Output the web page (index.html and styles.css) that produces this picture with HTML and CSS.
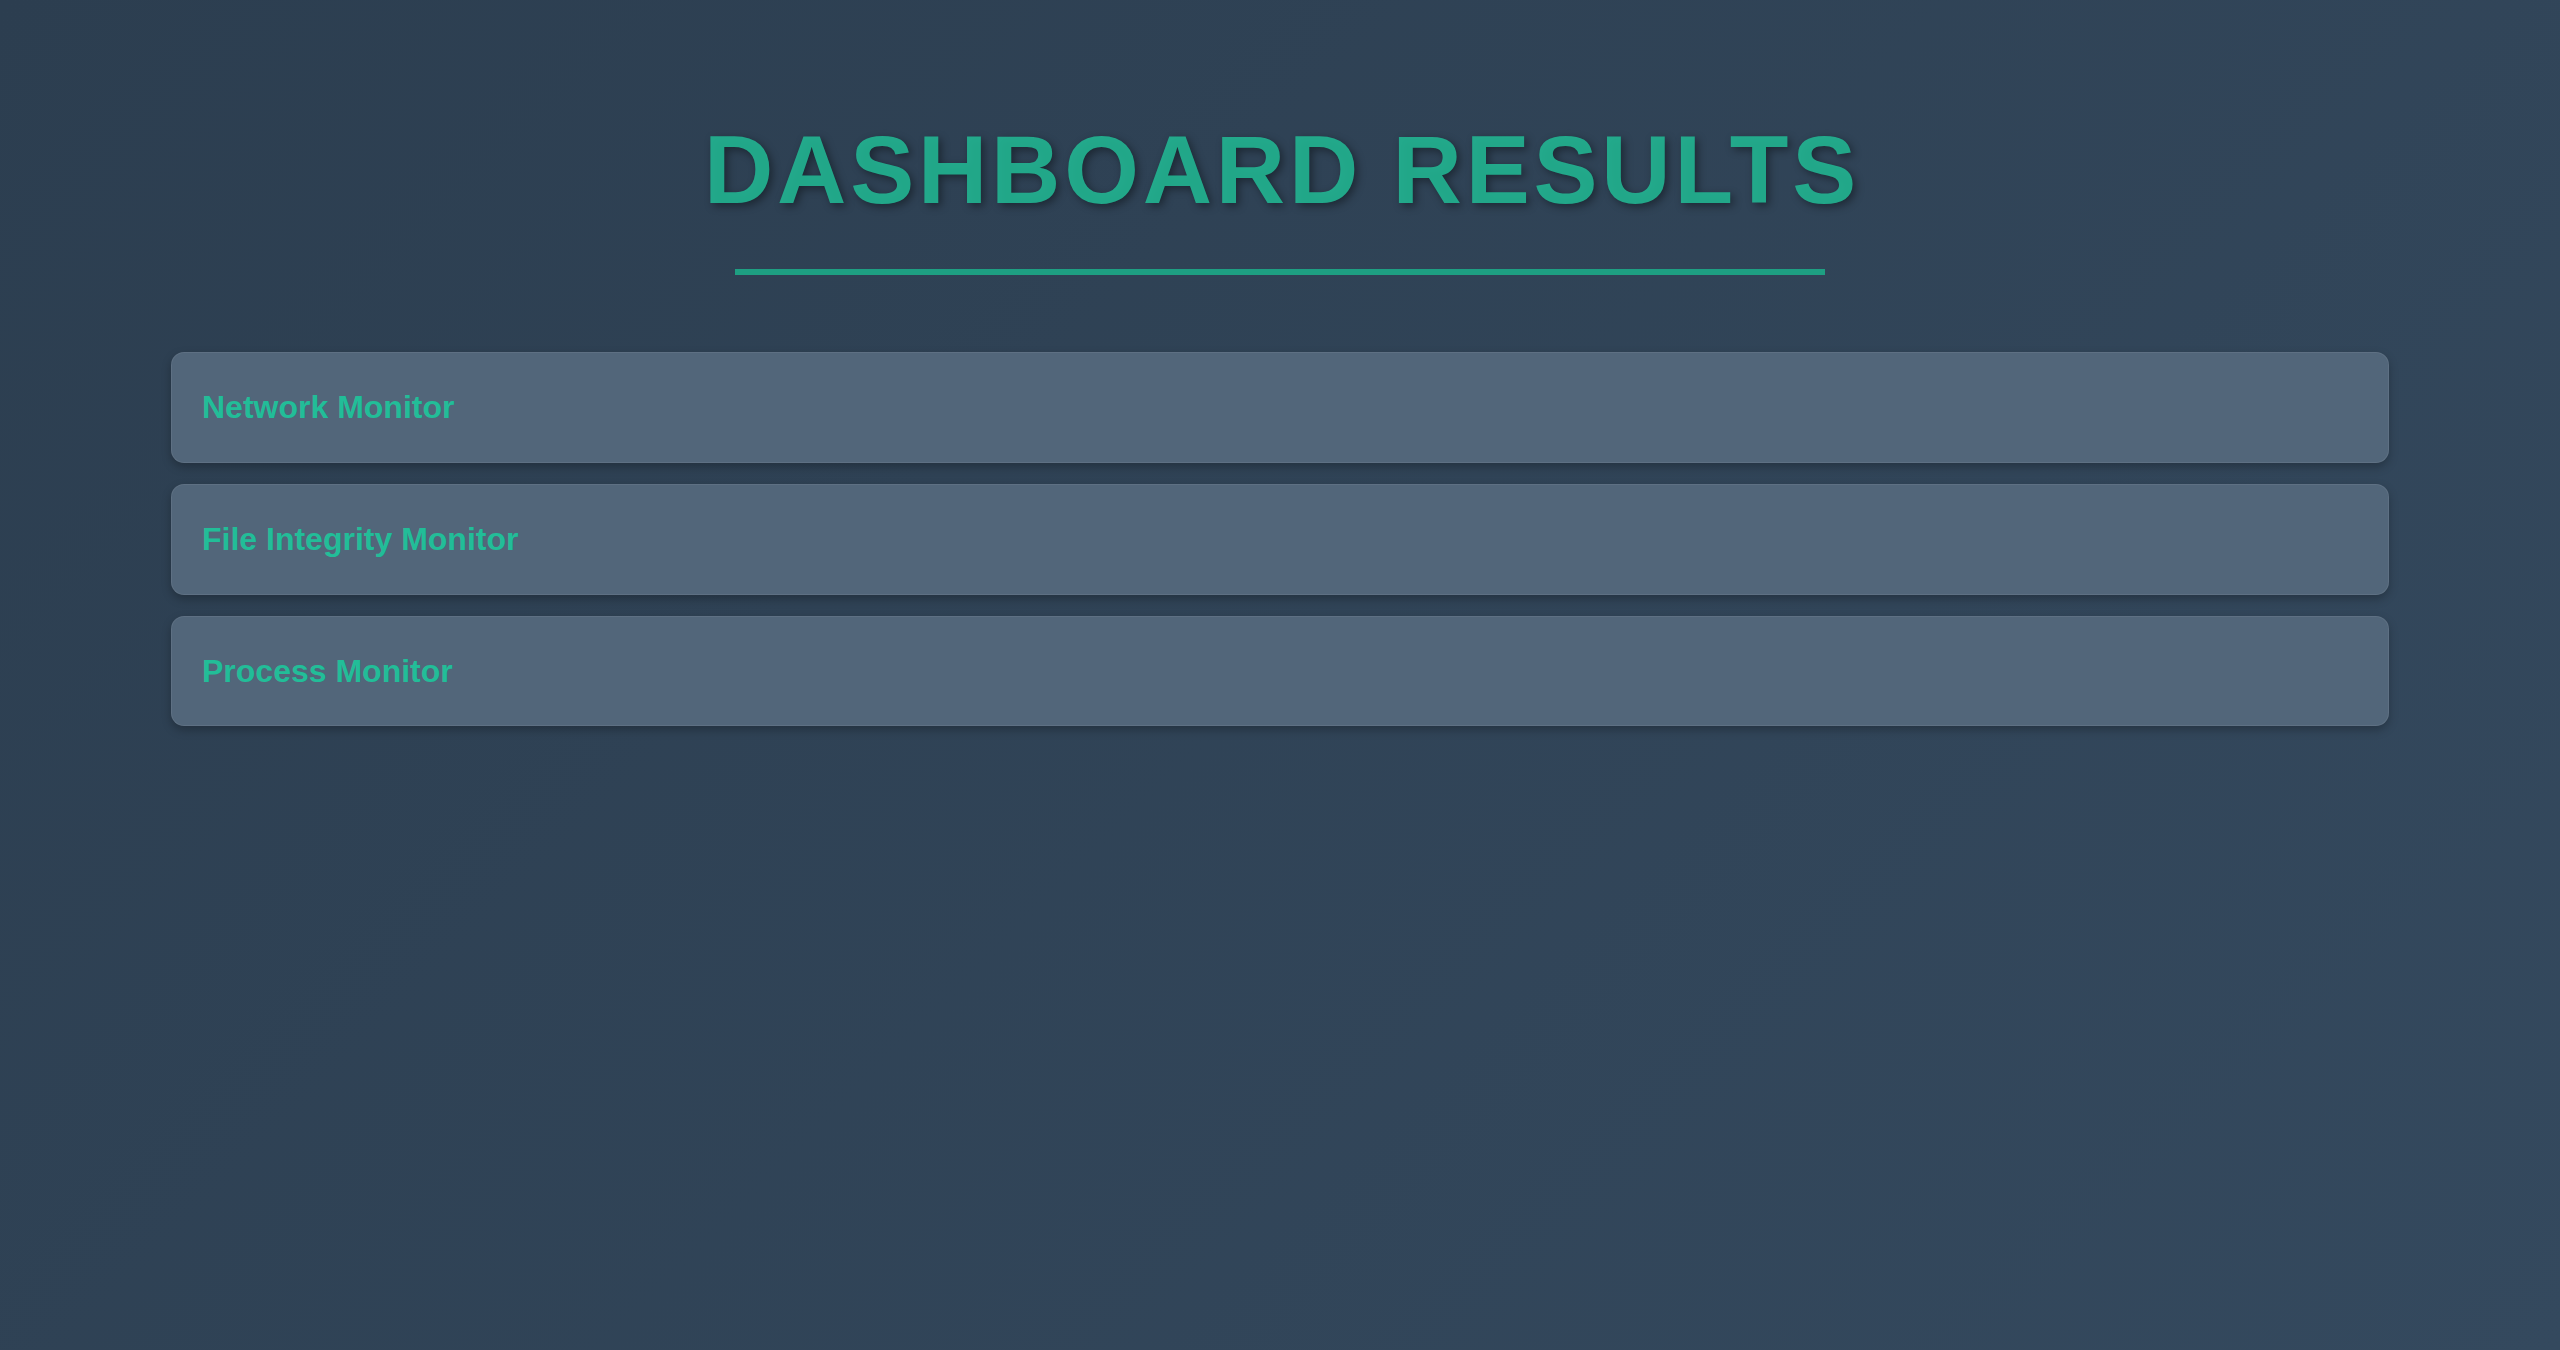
FILE: index.html
```html
<!DOCTYPE html>
<html lang="en">
<head>
<meta charset="utf-8">
<title>Dashboard Results</title>
<link rel="stylesheet" href="styles.css">
</head>
<body>
<div class="page">
  <header class="header">
    <h1 class="title">DASHBOARD RESULTS</h1>
    <div class="divider"></div>
  </header>
  <main class="cards">
    <section class="card"><h2 class="card-title">Network Monitor</h2></section>
    <section class="card"><h2 class="card-title">File Integrity Monitor</h2></section>
    <section class="card"><h2 class="card-title">Process Monitor</h2></section>
  </main>
</div>
</body>
</html>
```

FILE: styles.css
```css
html, body {
  margin: 0;
  padding: 0;
  height: 100%;
}
body {
  font-family: "Liberation Sans", Arial, sans-serif;
  background: linear-gradient(135deg, #2c3e50 0%, #34495e 100%);
  background-attachment: fixed;
  min-height: 100vh;
}
.page {
  padding: 115px 171px 0;
}
.header {
  display: flex;
  flex-direction: column;
  align-items: center;
}
.title {
  margin: 0;
  padding-left: 4px;
  font-size: 96px;
  line-height: 110px;
  font-weight: 700;
  color: rgba(34, 184, 148, 0.88);
  letter-spacing: 3.8px;
  text-shadow: 3px 3px 8px rgba(0, 0, 0, 0.4);
}
.divider {
  margin-top: 44px;
  width: 1090px;
  height: 6px;
  background: #1e9f82;
}
.cards {
  margin-top: 77px;
  display: flex;
  flex-direction: column;
  gap: 21px;
}
.card {
  background: #52667a;
  border: 1px solid rgba(255, 255, 255, 0.07);
  border-radius: 13px;
  padding: 36px 30px;
  box-shadow: 0 4px 10px rgba(0, 0, 0, 0.25);
}
.card-title {
  margin: 0;
  font-size: 32px;
  line-height: 1.15;
  font-weight: 700;
  color: #22bd98;
}
```
